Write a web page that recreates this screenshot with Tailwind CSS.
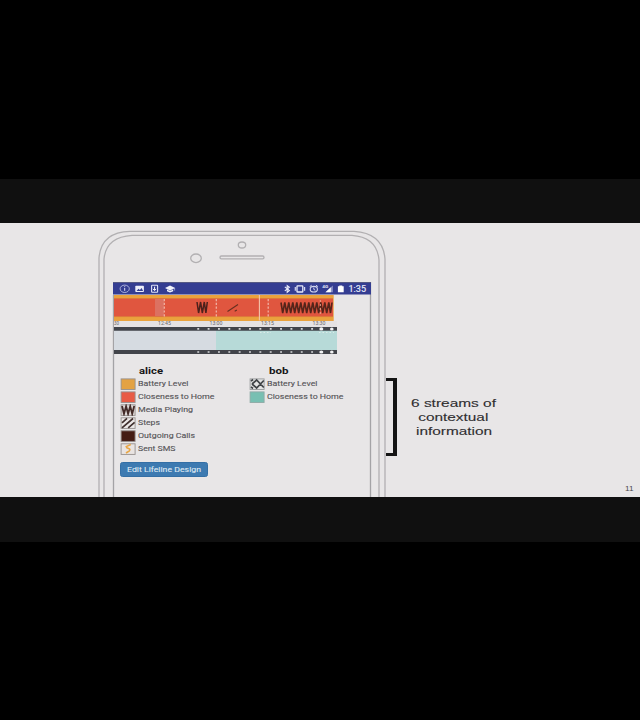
<!DOCTYPE html>
<html lang="en">
<head>
<meta charset="utf-8">
<title>Lifeline</title>
<script src="https://cdn.jsdelivr.net/npm/@tailwindcss/browser@4"></script>
</head>
<body class="bg-black w-[640px] h-[720px] overflow-hidden flex flex-col pt-[179px]">
<main class="h-[363px] bg-[#101010] pt-[44px] flex flex-col shrink-0">
<section class="relative flex h-[274px] bg-[#e8e6e7] overflow-hidden shrink-0">
  <div class="relative ml-[98px] w-[288px] h-full pt-[59px] pl-[15px]">
    <svg class="absolute inset-0" width="288" height="274" fill="none" stroke="#b2b0b2" stroke-width="1.3">
      <path d="M1 276V35Q3 9 32 8.3H256Q285 10 287 36V276"/>
      <path d="M6 276V36Q8 14 34 12.3H254Q279 14 281 37V276"/>
      <ellipse cx="144" cy="22" rx="3.7" ry="3"/>
      <ellipse cx="98" cy="35.3" rx="5.3" ry="4.3"/>
      <rect x="122" y="33" width="44" height="2.8" rx="1.4"/>
      <path d="M15.5 72V275M272.5 59V275" stroke="#a4a3a6"/>
    </svg>
    <div class="relative w-[258px] flex flex-col">
      <svg class="block" width="258" height="13" viewBox="113 282 258 13">
        <rect x="113" y="282.3" width="258" height="12.2" fill="#343d92"/>
        <path d="M113 282.5H371" stroke="#4d5072" stroke-width=".7"/>
        <ellipse cx="124.7" cy="288.8" rx="4.6" ry="3.7" fill="none" stroke="#c7cbea" stroke-width=".8"/>
        <path d="M124.7 288v2.8M124.7 286.3v.9" stroke="#dde0f5" stroke-width="1"/>
        <rect x="135.3" y="285.7" width="8.6" height="6.3" rx=".8" fill="#eceefa"/>
        <path d="M136.5 291l2-2.3 1.4 1.2 1.7-1.9 1.5 3z" fill="#343d92"/>
        <rect x="151.6" y="285.3" width="6" height="7" rx=".6" fill="none" stroke="#dfe2f5" stroke-width="1.1"/>
        <path d="M154.6 286.7v3.6M153 288.9l1.6 1.6 1.6-1.6" fill="none" stroke="#fff" stroke-width="1"/>
        <path d="M165 288l5-2.6 5.2 2.6-5.2 2.6zM167 289.6l3 1.5 3.2-1.5v1.6l-3.2 1.3-3-1.3z" fill="#f0f2fb"/>
        <path d="M174.6 288v2.5" stroke="#d6d9f0" stroke-width=".6"/>
        <path d="M284.8 286.8l4.6 3.8-2.2 1.7v-6.8l2.2 1.7-4.6 3.7" fill="none" stroke="#e9ebfa" stroke-width="1.1"/>
        <rect x="297" y="285.8" width="5.8" height="6.2" rx=".6" fill="none" stroke="#e9ebfa" stroke-width="1.3"/>
        <path d="M295.3 287v3.8M304.6 287v3.8" stroke="#d4d8f0" stroke-width="1.2"/>
        <ellipse cx="313.8" cy="289.2" rx="3.6" ry="2.8" fill="none" stroke="#d4d8f0" stroke-width="1.1"/>
        <path d="M309.7 286.6l2-1.4M317.9 286.6l-2-1.4M313.8 287.5v1.9l1.5.8" fill="none" stroke="#d4d8f0" stroke-width="1"/>
        <path d="M325.5 292.3l7.3-6.8v6.8z" fill="#8e94c8"/>
        <path d="M325.5 292.3l5.3-5v5z" fill="#fff"/>
        <text x="322.2" y="288.3" font-family="Roboto,sans-serif" font-weight="700" font-size="4" fill="#e3e5f6" textLength="6" lengthAdjust="spacingAndGlyphs">4G</text>
        <path d="M337.9 286.2h1.4v-.8h3v.8h1.4v6h-5.8z" fill="#fff"/>
        <text x="348.5" y="291.7" font-family="Roboto,sans-serif" font-size="8.2" fill="#eceefa" stroke="#eceefa" stroke-width=".15" textLength="17.5" lengthAdjust="spacingAndGlyphs">1:35</text>
      </svg>
      <svg class="block" width="258" height="61" viewBox="113 295 258 61">
        <rect x="114" y="294" width="219.7" height="27" fill="#eaa23d"/>
        <rect x="114" y="298.5" width="219" height="18" fill="#e0563f"/>
        <rect x="155" y="298.5" width="9" height="18" fill="#dc7161"/>
        <path d="M114 298.5H333M114 316.6H333" stroke="#d8743b" stroke-width=".6"/>
        <path d="M164.3 299V317M216.3 299V317M268.2 299V317" stroke="#f2b6a8" stroke-width="1.2" stroke-dasharray="2.2 1.6"/>
        <path d="M259.4 294.5V320.5" stroke="#f3c3a9" stroke-width="1.1"/>
        <path d="M197 302l1.6 11 2-11 1.7 11 2-11 1.6 11 1.4-11" fill="none" stroke="#4c211b" stroke-width="1.5"/>
        <path d="M227.5 311.5l10.5-7M234.7 311.2l2.2-1.2" stroke="#67301f" stroke-width="1.1"/>
        <path d="M281 302.5l1.7 10.5 2.1-10.5 1.9 10.5 2.1-10.5 1.9 10.5 2.1-10.5 1.9 10.5 2.1-10.5 1.9 10.5 2.1-10.5 1.9 10.5 2.1-10.5 1.9 10.5 2.1-10.5 1.9 10.5 2.1-10.5 1.9 10.5 2.1-10.5 1.9 10.5 2.1-10.5 1.9 10.5 2.1-10.5 1.9 10.5 2.1-10.5 1.7 10.5 1.5-10.5" fill="none" stroke="#55241a" stroke-width="1.6"/>
        <path d="M320.3 300V316" stroke="#e9a48f" stroke-width="1" stroke-dasharray="2 2"/>
        <rect x="114" y="321" width="223" height="6" fill="#e5e2e3"/>
        <g font-family="Roboto,sans-serif" font-size="4.7" fill="#69676b">
          <text x="114" y="325.4" textLength="5" lengthAdjust="spacingAndGlyphs">30</text>
          <text x="158" y="325.4" textLength="13" lengthAdjust="spacingAndGlyphs">12:45</text>
          <text x="209.5" y="325.4" textLength="13" lengthAdjust="spacingAndGlyphs">13:00</text>
          <text x="261" y="325.4" textLength="13" lengthAdjust="spacingAndGlyphs">13:15</text>
          <text x="312.5" y="325.4" textLength="13" lengthAdjust="spacingAndGlyphs">13:30</text>
        </g>
        <rect x="114" y="330" width="103" height="21" fill="#d6dbe1"/>
        <rect x="216" y="330" width="121" height="21" fill="#b7dad8"/>
        <path d="M114 328.9H337M114 352H337" stroke="#42444a" stroke-width="3.8"/>
        <path d="M197.3 328.9H315M197.3 352H315" stroke="#d5d6d9" stroke-width="1.7" stroke-dasharray="1.9 8.45"/>
        <g fill="#f1f2f3"><ellipse cx="321.3" cy="328.9" rx="2" ry="1.6"/><ellipse cx="331.8" cy="328.9" rx="1.8" ry="1.5"/><ellipse cx="321.3" cy="352" rx="2" ry="1.6"/><ellipse cx="331.8" cy="352" rx="1.8" ry="1.5"/></g>
        <path d="M260 332.5h11M319 332.5h15" stroke="#d9eae8" stroke-width="1.2" stroke-dasharray="1.5 2"/>
      </svg>
      <div class="flex pl-[7px] pt-[9px]">
        <div class="flex flex-col w-[129px]">
          <svg class="block" width="129" height="12"><text x="19" y="9.3" font-family="Roboto,sans-serif" font-weight="700" font-size="9.2" fill="#171618" textLength="24" lengthAdjust="spacingAndGlyphs">alice</text></svg>
          <div class="flex flex-col font-[Roboto,sans-serif]">
            <div class="flex h-[13px] gap-[2px] items-center"><svg width="16" height="12"><rect x="1.1" y=".9" width="14" height="10.6" fill="#e3a243" stroke="#96908e" stroke-width=".9"/></svg><svg width="110" height="13"><text y="9.4" font-size="7.8" fill="#565558" stroke="#565558" stroke-width=".12" textLength="50.5" lengthAdjust="spacingAndGlyphs">Battery Level</text></svg></div>
            <div class="flex h-[13px] gap-[2px] items-center"><svg width="16" height="12"><rect x="1.1" y=".9" width="14" height="10.6" fill="#e85b45" stroke="#96908e" stroke-width=".9"/></svg><svg width="110" height="13"><text y="9.4" font-size="7.8" fill="#565558" stroke="#565558" stroke-width=".12" textLength="76.5" lengthAdjust="spacingAndGlyphs">Closeness to Home</text></svg></div>
            <div class="flex h-[13px] gap-[2px] items-center"><svg width="16" height="12"><rect x="1.1" y=".8" width="14" height="10.6" fill="#dfd9d7" stroke="#96908e" stroke-width=".9"/><path d="M2 2l2 7.8 2.1-7.5 2 7.5 2.1-7.5 2 7.5 2-7.8" fill="none" stroke="#432b28" stroke-width="1.8"/></svg><svg width="110" height="13"><text y="9.3" font-size="7.8" fill="#565558" stroke="#565558" stroke-width=".12" textLength="55" lengthAdjust="spacingAndGlyphs">Media Playing</text></svg></div>
            <div class="flex h-[13px] gap-[2px] items-center"><svg width="16" height="12"><rect x="1.1" y=".8" width="14" height="10.6" fill="#ece8e7" stroke="#96908e" stroke-width=".9"/><path d="M2 5.8L7 1.4M2 10.8L13 1.5M8.2 10.8L14.6 5.4" fill="none" stroke="#40302e" stroke-width="1.7"/></svg><svg width="110" height="13"><text y="9.3" font-size="7.8" fill="#565558" stroke="#565558" stroke-width=".12" textLength="22" lengthAdjust="spacingAndGlyphs">Steps</text></svg></div>
            <div class="flex h-[13px] gap-[2px] items-center"><svg width="16" height="12"><rect x="1.1" y=".8" width="14" height="10.6" fill="#441c14" stroke="#96908e" stroke-width=".9"/></svg><svg width="110" height="13"><text y="9.2" font-size="7.8" fill="#565558" stroke="#565558" stroke-width=".12" textLength="57" lengthAdjust="spacingAndGlyphs">Outgoing Calls</text></svg></div>
            <div class="flex h-[13px] gap-[2px] items-center"><svg width="16" height="12"><rect x="1.1" y=".8" width="14" height="10.6" fill="#e9e4e2" stroke="#96908e" stroke-width=".9"/><path d="M10.8 1.6L6.2 3.6Q6.6 5.2 8.4 5.4Q10.8 6.2 9.4 7.8L6 10" fill="none" stroke="#e8a645" stroke-width="1.6"/></svg><svg width="110" height="13"><text y="9.1" font-size="7.8" fill="#565558" stroke="#565558" stroke-width=".12" textLength="37.5" lengthAdjust="spacingAndGlyphs">Sent SMS</text></svg></div>
          </div>
        </div>
        <div class="flex flex-col">
          <svg class="block" width="120" height="12"><text x="20" y="9.3" font-family="Roboto,sans-serif" font-weight="700" font-size="9.2" fill="#171618" textLength="19.5" lengthAdjust="spacingAndGlyphs">bob</text></svg>
          <div class="flex flex-col font-[Roboto,sans-serif]">
            <div class="flex h-[13px] gap-[2px] items-center"><svg width="16" height="12"><rect x="1.1" y=".9" width="14" height="10.6" fill="#e4e5e5" stroke="#96999b" stroke-width=".9"/><path d="M2 3.2L4 1.5M2 8.8L4 10.5M3 6l4.6-4L14.8 9.5M3 6l4.6 4L14.8 2.5" fill="none" stroke="#3f4347" stroke-width="1.7"/></svg><svg width="105" height="13"><text y="9.4" font-size="7.8" fill="#565558" stroke="#565558" stroke-width=".12" textLength="50.5" lengthAdjust="spacingAndGlyphs">Battery Level</text></svg></div>
            <div class="flex h-[13px] gap-[2px] items-center"><svg width="16" height="12"><rect x="1.1" y=".9" width="14" height="10.6" fill="#78bfb2" stroke="#8fa9a6" stroke-width=".9"/></svg><svg width="105" height="13"><text y="9.4" font-size="7.8" fill="#565558" stroke="#565558" stroke-width=".12" textLength="76.5" lengthAdjust="spacingAndGlyphs">Closeness to Home</text></svg></div>
          </div>
        </div>
      </div>
      <button class="ml-[7px] mt-[7px] w-[88px] h-[15px] rounded-[2.5px] bg-[#3d7ab1] border border-[#346fa5] flex items-center justify-center">
        <svg width="75" height="13"><text y="9.1" font-family="Roboto,sans-serif" font-size="7.8" fill="#dfe9f3" stroke="#dfe9f3" stroke-width=".1" textLength="74" lengthAdjust="spacingAndGlyphs">Edit Lifeline Design</text></svg>
      </button>
    </div>
  </div>
  <div class="mt-[155px] h-[78px] w-[11px] border-y-[3px] border-r-[4px] border-[#141414]"></div>
  <svg class="ml-[13px] mt-[172px]" width="90" height="44" font-family="Liberation Sans,sans-serif" font-size="11.8" fill="#302f31" stroke="#302f31" stroke-width=".12">
    <text x="1" y="12.4" textLength="85" lengthAdjust="spacingAndGlyphs">6 streams of</text>
    <text x="8.3" y="26.3" textLength="70" lengthAdjust="spacingAndGlyphs">contextual</text>
    <text x="6" y="40.1" textLength="76" lengthAdjust="spacingAndGlyphs">information</text>
  </svg>
  <svg class="ml-auto mr-[5px] mt-[260px]" width="11" height="10"><text x="1" y="8" font-family="Liberation Sans,sans-serif" font-size="6.8" fill="#4b4a4c" textLength="8.5" lengthAdjust="spacingAndGlyphs">11</text></svg>
</section>
</main>
</body>
</html>
